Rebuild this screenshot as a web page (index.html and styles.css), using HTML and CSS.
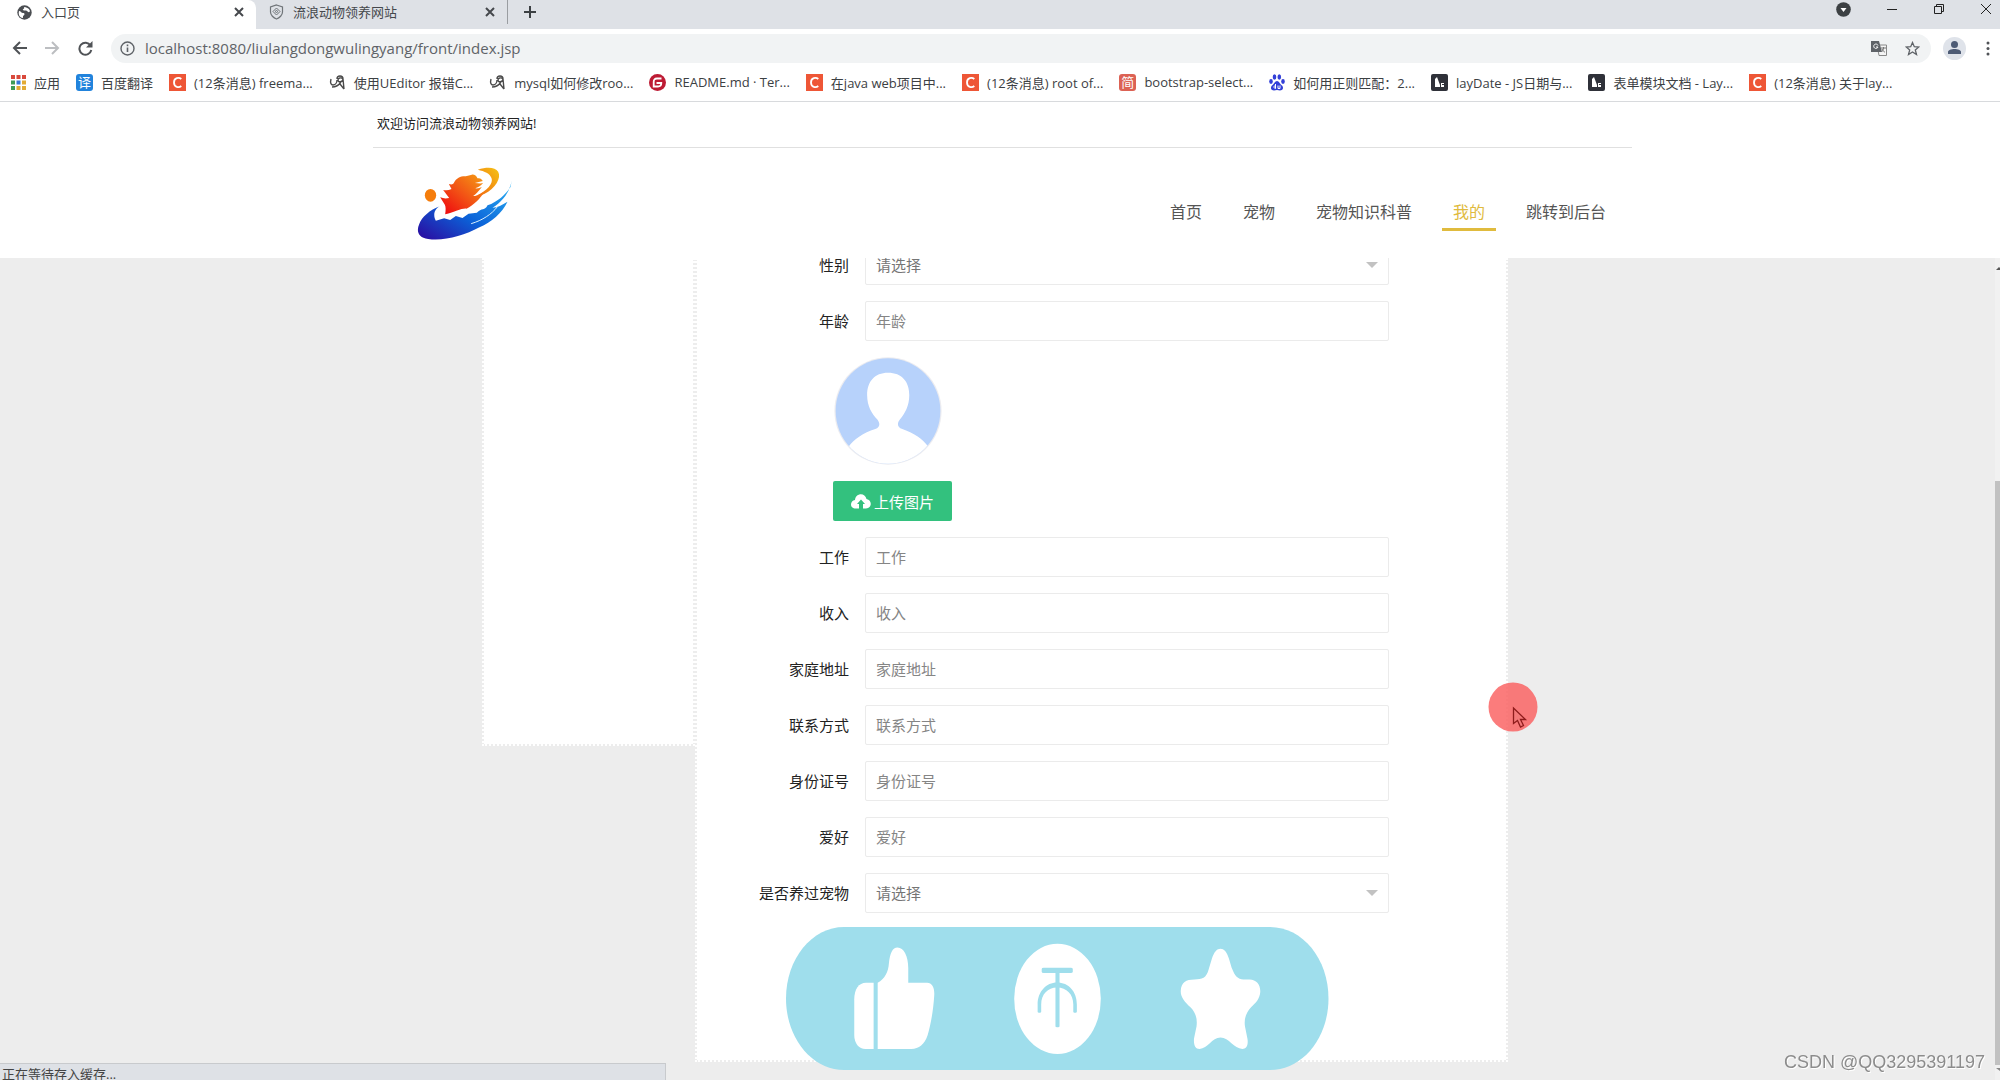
FILE: index.html
```html
<!DOCTYPE html>
<html lang="zh-CN">
<head>
<meta charset="utf-8">
<title>入口页</title>
<link rel="stylesheet" href="styles.css">
</head>
<body>
<svg class="defs" aria-hidden="true">
  <symbol id="close" viewBox="0 0 10 10"><path d="M1 1l8 8M9 1l-8 8" stroke="#45484c" stroke-width="2" fill="none"/></symbol>
  <symbol id="csdn" viewBox="0 0 17 17"><rect width="17" height="17" fill="#ee5636"/><path d="M12.300 5C10 3 5 3.500 5 8.500S10 14 12.300 12" fill="none" stroke="#fff" stroke-width="1.800"/></symbol>
  <symbol id="snail" viewBox="0 0 17 17"><path d="M2 5c-1 4 0 6 2 6s4-2 4-5M8 5c0-4 6-4 6 0 0 3-5 4-5 1 0-2 3-3 5-1l1 10M3 13c4 0 7-2 9-5M11 10l4 5" fill="none" stroke="#4a4a4a" stroke-width="1.400"/></symbol>
  <symbol id="lay" viewBox="0 0 17 17"><rect width="17" height="17" rx="2" fill="#2f3139"/><path d="M4 13V5l2-2 3 8v2zM10 9h3v1h-2v1h2v2h-3z" fill="#fff"/></symbol>
  <symbol id="arrow" viewBox="0 0 12 6"><path d="M0 0h12L6 6z" fill="#c2c2c2"/></symbol>
</svg>

<div class="tabs">
  <div class="tab tab-active">
    <svg width="15" height="15" viewBox="0 0 15 15"><circle cx="7.500" cy="7.500" r="7.200" fill="#4b4e52"/><path d="M2 6c2 0 2 2 4 2s2 2 0 3v2C3 13 1 10 2 6zM7 2c2 0 5 1 6 4-1 2-2 1-3 0s-3 0-4-1 2-1 1-3z" fill="#fff"/></svg>
    <span class="tab-title">入口页</span>
    <button class="icon-button" aria-label="关闭"><svg width="10" height="10"><use href="#close"/></svg></button>
  </div>
  <div class="tab">
    <svg width="15" height="16" viewBox="0 0 15 16" fill="none" stroke="#6f7478"><path d="M7.500 1l6 2v5c0 3-3 6-6 7-3-1-6-4-6-7V3z" stroke-width="1.200"/><path d="M7.500 4l3.500 3.500L7.500 11 4 7.500z"/><circle cx="7.500" cy="7.500" r="1"/></svg>
    <span class="tab-title">流浪动物领养网站</span>
    <button class="icon-button" aria-label="关闭"><svg width="10" height="10"><use href="#close"/></svg></button>
  </div>
  <button class="icon-button new-tab" aria-label="新标签页"><svg width="14" height="14" viewBox="0 0 14 14"><path d="M7 1v12M1 7h12" stroke="#3c4043" stroke-width="2"/></svg></button>
  <div class="window-controls">
    <svg width="15" height="15" viewBox="0 0 15 15"><circle cx="7.500" cy="7.500" r="7.300" fill="#3c4043"/><path d="M4.500 6h6l-3 4z" fill="#fff"/></svg>
    <button class="icon-button" aria-label="最小化"><svg width="12" height="12" viewBox="0 0 12 12"><path d="M1 6.500h10" stroke="#222"/></svg></button>
    <button class="icon-button" aria-label="还原"><svg width="12" height="12" viewBox="0 0 12 12" fill="none" stroke="#222"><path d="M1.500 3.500h7v7h-7zM3.500 3V1.500h7v7H9"/></svg></button>
    <button class="icon-button" aria-label="关闭窗口"><svg width="12" height="12" viewBox="0 0 12 12"><path d="M1 1l10 10M11 1L1 11" stroke="#222"/></svg></button>
  </div>
</div>

<div class="toolbar">
  <button class="icon-button" aria-label="后退"><svg width="15" height="14" viewBox="0 0 15 14" fill="none" stroke="#505357" stroke-width="2"><path d="M15 7H2M8 1L2 7l6 6"/></svg></button>
  <button class="icon-button" aria-label="前进"><svg width="15" height="14" viewBox="0 0 15 14" fill="none" stroke="#bcbec1" stroke-width="2"><path d="M0 7h13M7 1l6 6-6 6"/></svg></button>
  <button class="icon-button" aria-label="重新加载"><svg width="15" height="15" viewBox="0 0 15 15"><path d="M12.500 4.500A6 6 0 1 0 13.300 9" fill="none" stroke="#505357" stroke-width="2"/><path d="M14.500 0v6.500H8z" fill="#505357"/></svg></button>
  <div class="address">
    <svg width="15" height="15" viewBox="0 0 15 15" fill="none" stroke="#5f6368"><circle cx="7.500" cy="7.500" r="6.500" stroke-width="1.400"/><path d="M7.500 6.500V11M7.500 3.500v1.800" stroke-width="1.600"/></svg>
    <input class="url" aria-label="地址" value="localhost:8080/liulangdongwulingyang/front/index.jsp">
    <svg width="16" height="15" viewBox="0 0 16 15"><path d="M6 4h9.500v10.500H8z" fill="#f4f4f4" stroke="#888"/><path d="M0 0h8l3 11H0z" fill="#5f6368"/><path d="M7 4.500A2.200 2.200 0 1 0 7 6H5" fill="none" stroke="#fff"/><path d="M10 7h5M12.500 6v1c0 2-1 3-2 4M11 8c1 2 2 3 3 3" fill="none" stroke="#777"/></svg>
    <svg width="15" height="15" viewBox="0 0 15 15"><path d="M7.500 1.500l1.800 4.200 4.500.3-3.500 3 1.200 4.500-4-2.500-4 2.500L4.700 9 1.200 6l4.500-.3z" fill="none" stroke="#5f6368" stroke-width="1.300"/></svg>
  </div>
  <svg width="23" height="23" viewBox="0 0 23 23"><circle cx="11.500" cy="11.500" r="11.500" fill="#dfe3ea"/><circle cx="11.500" cy="7.500" r="3.500" fill="#4d5b75"/><path d="M5 17v-2c0-4 13-4 13 0v2z" fill="#4d5b75"/></svg>
  <button class="icon-button menu-button" aria-label="菜单"><svg width="4" height="15" viewBox="0 0 4 15" fill="#505357"><circle cx="2" cy="2" r="1.500"/><circle cx="2" cy="7.500" r="1.500"/><circle cx="2" cy="13" r="1.500"/></svg></button>
</div>

<nav class="bookmarks" aria-label="书签">
  <a href="#"><svg width="15" height="15" viewBox="0 0 15 15"><path d="M0 0h4v4H0zM5.500 0h4v4h-4zM11 0h4v4h-4z" fill="#d9493c"/><path d="M0 5.500h4v4H0z" fill="#3f9b57"/><path d="M5.500 5.500h4v4h-4z" fill="#3878d8"/><path d="M11 5.500h4v4h-4zM5.500 11h4v4h-4zM11 11h4v4h-4z" fill="#e2ab35"/><path d="M0 11h4v4H0z" fill="#3f9b57"/></svg>应用</a>
  <a href="#"><span class="badge badge-blue">译</span>百度翻译</a>
  <a href="#"><svg width="17" height="17"><use href="#csdn"/></svg>(12条消息) freema...</a>
  <a href="#"><svg width="17" height="17"><use href="#snail"/></svg>使用UEditor 报错C...</a>
  <a href="#"><svg width="17" height="17"><use href="#snail"/></svg>mysql如何修改roo...</a>
  <a href="#"><svg width="17" height="17" viewBox="0 0 17 17"><circle cx="8.500" cy="8.500" r="8.500" fill="#bd1b34"/><path d="M12.500 4.500H8C5.500 4.500 4.700 6 4.700 8v4.500H9c2.500 0 3.300-1 3.300-3.500H7.500" fill="none" stroke="#fff" stroke-width="1.800"/></svg>README.md · Ter...</a>
  <a href="#"><svg width="17" height="17"><use href="#csdn"/></svg>在java web项目中...</a>
  <a href="#"><svg width="17" height="17"><use href="#csdn"/></svg>(12条消息) root of...</a>
  <a href="#"><span class="badge badge-red">简</span>bootstrap-select...</a>
  <a href="#"><svg width="16" height="17" viewBox="0 0 16 17" fill="#3340d8"><ellipse cx="2" cy="7.500" rx="1.800" ry="2.400"/><ellipse cx="5.500" cy="3" rx="1.800" ry="2.700"/><ellipse cx="10.300" cy="3" rx="1.800" ry="2.700"/><ellipse cx="14" cy="7.500" rx="1.800" ry="2.400"/><path d="M8 7c2 0 3 3 5 4.500 2 2 1 5-2 5-1 0-2-.5-3-.5s-2 .5-3 .5c-3 0-4-3-2-5C5 10 6 7 8 7z"/><path d="M6.500 11.500c-2 0-2 3 0 3V10M9 11.500v3h2v-3" fill="none" stroke="#fff"/></svg>如何用正则匹配：2...</a>
  <a href="#"><svg width="17" height="17"><use href="#lay"/></svg>layDate - JS日期与...</a>
  <a href="#"><svg width="17" height="17"><use href="#lay"/></svg>表单模块文档 - Lay...</a>
  <a href="#"><svg width="17" height="17"><use href="#csdn"/></svg>(12条消息) 关于lay...</a>
</nav>

<header class="site-header">
  <div class="site-header-inner">
    <p class="welcome">欢迎访问流浪动物领养网站!</p>
    <div class="brand-row">
      <svg class="logo" width="95" height="74" viewBox="172 198 284 222" role="img" aria-label="网站标志">
        <defs>
          <linearGradient id="flame" x1="0" y1="1" x2="1" y2="0"><stop offset=".1" stop-color="#ef1010"/><stop offset=".5" stop-color="#f25215"/><stop offset="1" stop-color="#f5a014"/></linearGradient>
          <linearGradient id="gold" x1="0" y1="1" x2="1" y2="0"><stop offset="0" stop-color="#f1660f"/><stop offset="1" stop-color="#f5c415"/></linearGradient>
          <linearGradient id="wave" x1="0" y1="1" x2="1" y2="0"><stop offset=".05" stop-color="#2911a4"/><stop offset=".45" stop-color="#0b62d8"/><stop offset="1" stop-color="#2bb4f4"/></linearGradient>
        </defs>
        <ellipse cx="212" cy="286" rx="17" ry="19" fill="#f57d0c"/>
        <path d="M256 343c2-14 2-22-1-29l-14-22c10 4 18 4 27 2l-18-24c9 2 17 1 25-3l-8-15c8 3 13 1 15-3 8-16 22-21 36-20l18-5c8-1 14 4 17 11 8-2 12 2 16 8l-24 6c9 0 17 3 25 0-8 9-16 13-24 16 9 1 14-1 20-4-10 14-18 21-26 27 15 0 27-8 36-15-16 24-34 42-56 53-14-2-34 10-64 17z" fill="url(#flame)"/>
        <path d="M354 209c28-9 52-8 61 6 10 18-7 49-42 67-9 4-16 5-24 5 34-15 52-37 46-53-5-14-20-20-41-25z" fill="url(#gold)"/>
        <path d="M240 319c-19 10-20 30-12 43l25-7 18 5 17-12 20 6 18-13 25-3c14-14 25-6 32-22 32-11 54-33 69-55l4-20c-7 35-26 62-58 82 16-1 28-8 45-18-17 35-48 61-84 77-47 25-107 42-154 35-30-3-36-24-27-44 8-22 32-43 62-54z" fill="url(#wave)"/>
        <path d="M334 371c34-10 62-29 78-50" fill="none" stroke="#d9efff" stroke-width="3"/>
      </svg>
      <nav class="site-nav" aria-label="主导航">
        <a href="#">首页</a>
        <a href="#">宠物</a>
        <a href="#">宠物知识科普</a>
        <a href="#" class="current">我的</a>
        <a href="#">跳转到后台</a>
      </nav>
    </div>
  </div>
</header>

<main class="content">
  <aside class="side-panel"></aside>
  <section class="form-panel">
    <form class="form">
      <div class="field"><label for="gender">性别</label><div class="select-box"><select id="gender"><option>请选择</option></select><svg class="caret" width="12" height="6"><use href="#arrow"/></svg></div></div>
      <div class="field"><label for="age">年龄</label><input id="age" placeholder="年龄"></div>
      <svg class="avatar" width="108" height="108" viewBox="132 322 264 328" preserveAspectRatio="none" role="img" aria-label="头像">
        <clipPath id="round"><ellipse cx="264" cy="486" rx="128" ry="160"/></clipPath>
        <ellipse cx="264" cy="486" rx="131" ry="163" fill="#ececf0"/>
        <g clip-path="url(#round)"><path d="M132 322h264v328H132z" fill="#b7d2fb"/><path d="M264 370c34 0 52 27 52 68 0 32-11 56-23 74-7 11-7 23 6 29 30 13 49 30 64 54l20 60H145l22-60c15-24 36-42 66-54 12-6 12-18 5-29-14-18-25-42-25-74 0-41 18-68 51-68z" fill="#fff"/></g>
      </svg>
      <button type="button" class="upload"><svg width="20" height="15" viewBox="0 0 20 15"><path d="M5 14.500c-7 0-6-8-1-8.500C4.500-1 14-2 15.500 5c6 1 5.500 9.500-.5 9.500h-3V10h2l-4-4.500L6 10h2v4.500z" fill="#fff"/></svg>上传图片</button>
      <div class="field"><label for="job">工作</label><input id="job" placeholder="工作"></div>
      <div class="field"><label for="income">收入</label><input id="income" placeholder="收入"></div>
      <div class="field"><label for="home">家庭地址</label><input id="home" placeholder="家庭地址"></div>
      <div class="field"><label for="contact">联系方式</label><input id="contact" placeholder="联系方式"></div>
      <div class="field"><label for="idno">身份证号</label><input id="idno" placeholder="身份证号"></div>
      <div class="field"><label for="hobby">爱好</label><input id="hobby" placeholder="爱好"></div>
      <div class="field"><label for="pets">是否养过宠物</label><div class="select-box"><select id="pets"><option>请选择</option></select><svg class="caret" width="12" height="6"><use href="#arrow"/></svg></div></div>
    </form>
    <svg class="reactions" width="543" height="143" viewBox="90 79 1066 428" preserveAspectRatio="none" role="img" aria-label="点赞 投币 收藏">
      <path d="M204 79h836c64 0 115 95 115 214s-51 214-115 214H204C141 507 90 412 90 293S141 79 204 79z" fill="#9fdeec"/>
      <g fill="#fff">
        <path d="M262 246v198h-16c-13 0-22-17-22-42V296c0-31 9-50 23-50z"/>
        <path d="M270 246c14-12 21-33 22-58 2-31 7-48 17-48 12 0 21 25 21 62v44h37c10 0 15 15 14 38-2 47-7 88-13 119-6 27-17 41-32 41h-66z"/>
        <ellipse cx="623" cy="294" rx="85" ry="165"/>
        <path d="M943 144c14 0 17 35 23 61 5 20 11 31 22 31h12c14 0 22 17 21 38-1 19-8 31-18 45-10 16-14 35-12 57l5 38c2 20-3 30-10 30-17 0-26-34-43-34s-25 34-41 34c-9 0-12-13-11-31l5-37c2-26-3-43-12-57-11-15-20-31-19-50 1-24 10-33 27-33 15 0 23-3 28-31 6-27 9-61 23-61z"/>
      </g>
      <g fill="#9fdeec">
        <rect x="592" y="201" width="61" height="16" rx="4"/>
        <rect x="619" y="210" width="8" height="169" rx="3"/>
        <path d="M584 333v-22c0-39 17-66 38-66 23 0 39 27 39 66v22c0 4-7 4-7 0v-22c0-31-13-51-32-51-18 0-31 20-31 51v22c0 4-7 4-7 0z"/>
      </g>
    </svg>
  </section>
  <div class="scrollbar"><svg width="5" height="5" viewBox="0 0 5 5"><path d="M1 4l3-3 1 1v2z" fill="#555"/></svg><span class="scroll-thumb"></span><svg width="5" height="5" viewBox="0 0 5 5"><path d="M1 1h4v3z" fill="#888"/></svg></div>
</main>

<div class="status">正在等待存入缓存...</div>
<div class="watermark">CSDN @QQ3295391197</div>
<svg class="pointer" width="50" height="50" viewBox="0 0 50 50" aria-hidden="true"><circle cx="25" cy="25" r="24.500" fill="#fa5b5b" fill-opacity=".8"/><path d="M25.500 26v15.500l4-3 3 6.500 3-1.500-3-6h5z" fill="#f37878" stroke="#8f1c1c" stroke-width="1.300"/></svg>
</body>
</html>
```
FILE: styles.css
```css
* { box-sizing: border-box; }

body {
  margin: 0;
  height: 100vh;
  display: flex;
  flex-direction: column;
  overflow: hidden;
  background: #ededed;
  color: #222;
  font-family: "Open Sans", "Noto Sans CJK SC", sans-serif;
  font-size: 15px;
}

a { color: inherit; text-decoration: none; }
svg { display: block; flex: none; }
input, select, button { font: inherit; }
.defs { position: absolute; width: 0; height: 0; }

.icon-button {
  display: flex;
  padding: 0;
  border: 0;
  background: none;
}

/* browser chrome */
.tabs {
  flex: none;
  display: flex;
  height: 29px;
  background: #dee1e6;
  font-size: 13px;
  color: #45484c;
}

.tab {
  display: flex;
  align-items: center;
  gap: 9px;
  width: 251px;
  padding: 0 12px 5px 13px;
}

.tab-active {
  width: 256px;
  padding-left: 17px;
  background: #fff;
  border-radius: 0 8px 0 0;
}

.tab-title { flex: 1; line-height: 24px; white-space: nowrap; }

.new-tab {
  align-items: center;
  height: 24px;
  padding-left: 15px;
  border-left: 1px solid #9a9da1;
}

.window-controls {
  display: flex;
  align-items: center;
  gap: 35px;
  height: 18px;
  margin-left: auto;
  padding-right: 8px;
}

.toolbar {
  flex: none;
  display: flex;
  align-items: center;
  gap: 18px;
  height: 39px;
  padding: 0 10px 1px 12px;
  background: #fff;
}

.address {
  flex: 1;
  display: flex;
  align-items: center;
  gap: 10px;
  height: 29px;
  margin-right: -6px;
  padding: 0 11px 0 9px;
  border-radius: 15px;
  background: #f1f3f4;
}

.url {
  flex: 1;
  min-width: 0;
  padding: 0;
  border: 0;
  background: none;
  color: #5f6368;
  font-size: 15px;
}

.menu-button { margin-left: 2px; }
.address svg:last-child { margin-left: 8px; }

.bookmarks {
  flex: none;
  display: flex;
  gap: 16px;
  height: 34px;
  padding: 0 0 5px 11px;
  border-bottom: 1px solid #d8dadd;
  background: #fff;
  color: #3c4043;
  font-size: 13px;
  white-space: nowrap;
}

.bookmarks a { display: flex; align-items: center; gap: 8px; }

.badge {
  width: 17px;
  height: 17px;
  border-radius: 3px;
  color: #fff;
  line-height: 17px;
  text-align: center;
}

.badge-blue { background: #2183dc; }
.badge-red { background: #dc6254; }

/* site header */
.site-header {
  flex: none;
  display: grid;
  grid-template-columns: 373fr 1259fr 368fr;
  background: #fff;
}

.site-header-inner { grid-column: 2; }

.welcome {
  margin: 0;
  height: 46px;
  padding-left: 4px;
  border-bottom: 1px solid #e0e0e0;
  font-size: 13px;
  line-height: 42px;
}

.brand-row {
  display: flex;
  align-items: center;
  justify-content: space-between;
  height: 110px;
  padding: 0 15px 0 44px;
}

.site-nav {
  display: flex;
  gap: 19px;
  padding-top: 20px;
  color: #555;
  font-size: 16px;
}

.site-nav a {
  padding: 0 11px;
  border-bottom: 3px solid transparent;
  line-height: 32px;
}

.site-nav .current { color: #e0bb3e; border-color: #e0bb3e; }

/* scrolled page content */
.content {
  flex: 1;
  min-height: 0;
  display: grid;
  grid-template-columns: 482fr 213fr 813fr 487fr 5px;
  grid-template-rows: 100%;
  overflow: hidden;
}

.side-panel {
  grid-column: 2;
  height: 488px;
  border: 2px dotted #fff;
  border-top: 0;
  background: #fff;
  background-clip: padding-box;
}

.form-panel {
  grid-column: 3;
  position: relative;
  height: 804px;
  border: 2px dotted #fff;
  border-top: 0;
  background: #fff;
  background-clip: padding-box;
}

.form {
  display: flex;
  flex-direction: column;
  gap: 16px;
  margin-top: -13px;
  padding: 0 117px 0 60px;
}

.field { display: flex; align-items: center; gap: 16px; height: 40px; }
.field label { width: 92px; padding-bottom: 2px; text-align: right; white-space: nowrap; }

.field input, .field select {
  flex: 1;
  width: 100%;
  min-width: 0;
  height: 40px;
  padding: 0 10px 1px;
  border: 1px solid #ebebeb;
  border-radius: 2px;
  background: #fff;
  color: #757575;
}

.field input::placeholder { color: #858585; opacity: 1; }
.field select { appearance: none; }
.select-box { position: relative; flex: 1; }
.caret { position: absolute; top: 17px; right: 11px; }
.avatar { margin-left: 77px; }

.upload {
  display: flex;
  align-items: center;
  justify-content: center;
  gap: 3px;
  width: 119px;
  height: 40px;
  margin-left: 76px;
  padding: 0;
  border: 0;
  border-radius: 2px;
  background: #33c17e;
  color: #fff;
}

/* floating banner that runs past the bottom of the panel */
.reactions { position: absolute; left: 89px; bottom: -10px; }

.scrollbar {
  grid-column: 5;
  display: flex;
  flex-direction: column;
  padding: 8px 0;
  background: #f1f1f1;
}

.scroll-thumb { flex: 1; margin: 210px 0 2px; background: #c1c1c1; }

/* overlays */
.status {
  position: fixed;
  left: 0;
  bottom: 0;
  width: 666px;
  height: 17px;
  padding-left: 2px;
  border-top: 1px solid #c8cacd;
  border-right: 1px solid #c8cacd;
  background: #dee1e6;
  color: #444;
  font-size: 13px;
  line-height: 20px;
  overflow: hidden;
}

.watermark {
  position: fixed;
  right: 15px;
  bottom: 8px;
  color: #8c8c8c;
  font-family: "Liberation Sans", sans-serif;
  font-size: 18px;
  line-height: 20px;
  text-shadow: 1px 1px 0 #fff;
}

.pointer { position: fixed; left: 1488px; top: 682px; }
```
